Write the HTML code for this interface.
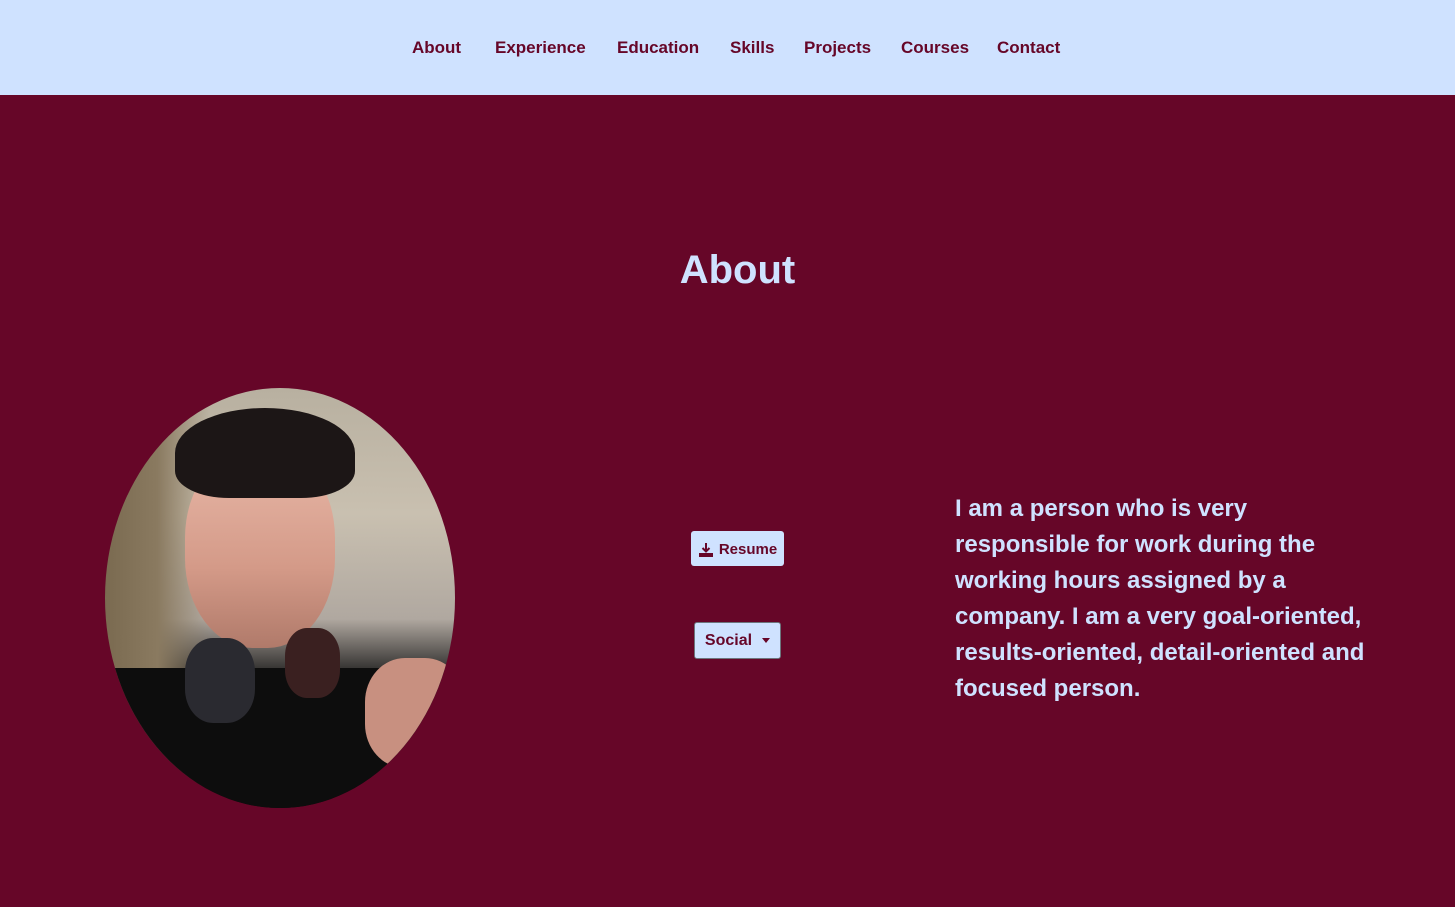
<!DOCTYPE html>
<html><head><style>
*{margin:0;padding:0;box-sizing:border-box}
body{width:1455px;height:907px;background:#660628;font-family:"Liberation Sans",sans-serif;overflow:hidden;position:relative}
nav{position:absolute;left:0;top:0;width:1455px;height:95px;background:#cfe2ff}
nav a{position:absolute;top:38px;font-size:17px;font-weight:bold;color:#660628;text-decoration:none}
h1{position:absolute;left:0;width:1475px;text-align:center;top:248px;font-size:40px;color:#cfe2ff;font-weight:bold}
.photo{position:absolute;left:105px;top:388px;width:350px;height:420px;border-radius:50%;overflow:hidden;
background:linear-gradient(90deg,#7a6a50 0%,#8a7a60 15%,transparent 30%),linear-gradient(180deg,#b8b0a0 0%,#c9c0b0 30%,#b0a8a0 55%,#151515 70%,#0a0a0a 100%)}
.face{position:absolute;left:80px;top:60px;width:150px;height:200px;border-radius:45%;background:linear-gradient(180deg,#e8b8a8,#d49a88 60%,#b07a6a)}
.hair{position:absolute;left:70px;top:20px;width:180px;height:90px;border-radius:50% 50% 30% 30%;background:#1c1616}
.shirt{position:absolute;left:0;top:280px;width:350px;height:140px;background:#0d0d0d}
.arm{position:absolute;left:260px;top:270px;width:100px;height:110px;border-radius:40%;background:#c89080}
.phone{position:absolute;border-radius:40%;background:#2a2a30}
.btn{position:absolute;background:#cfe2ff;color:#660628;font-weight:bold;font-size:15px;border-radius:3px;display:flex;align-items:center;justify-content:center}
p{position:absolute;left:955px;top:491px;width:430px;font-size:24px;line-height:36px;font-weight:bold;color:#cfe2ff}
</style></head><body>
<nav>
<a style="left:412px">About</a><a style="left:495px">Experience</a><a style="left:617px">Education</a><a style="left:730px">Skills</a><a style="left:804px">Projects</a><a style="left:901px">Courses</a><a style="left:997px">Contact</a>
</nav>
<h1>About</h1>
<div class="photo">
<div class="shirt"></div><div class="arm"></div>
<div class="face"></div><div class="hair"></div>
<div class="phone" style="left:80px;top:250px;width:70px;height:85px"></div>
<div class="phone" style="left:180px;top:240px;width:55px;height:70px;background:#3a2020"></div>
</div>
<div class="btn" style="left:691px;top:531px;width:93px;height:35px;padding-top:2px"><svg width="16" height="14" viewBox="0 0 16 14" style="margin-right:5px"><path d="M8 0v8M4.5 5L8 8.5 11.5 5" stroke="#660628" stroke-width="2" fill="none"/><path d="M1 10h14v4H1z" fill="#660628"/></svg>Resume</div>
<div class="btn" style="left:694px;top:622px;width:87px;height:37px;border:1px solid #6c757d;font-size:16px">Social<span style="margin-left:10px;border-top:5px solid #660628;border-left:4px solid transparent;border-right:4px solid transparent"></span></div>
<p>I am a person who is very responsible for work during the working hours assigned by a company. I am a very goal-oriented, results-oriented, detail-oriented and focused person.</p>
</body></html>
